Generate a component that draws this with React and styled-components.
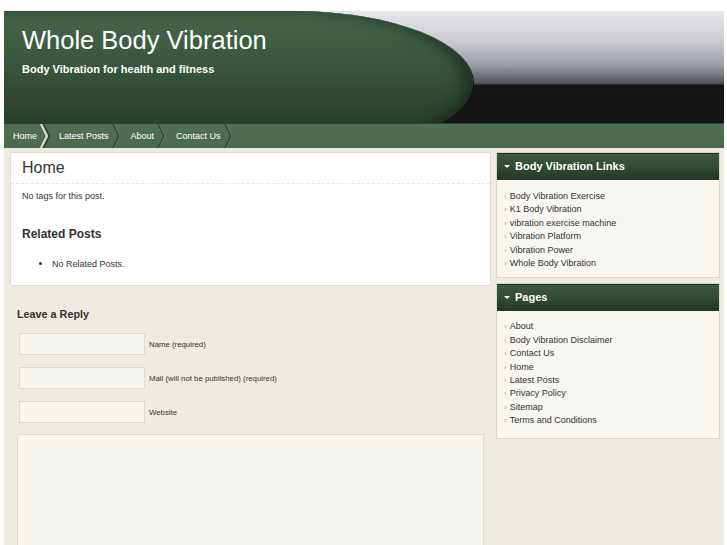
import React from 'react'
import styled, { createGlobalStyle } from 'styled-components'

const GlobalStyle = createGlobalStyle`
  html, body {
    margin: 0;
    padding: 0;
    background: #ffffff;
  }
  body {
    font-family: 'Liberation Sans', Arial, sans-serif;
    color: #333333;
  }
`

const Wrapper = styled.div`
  width: 720px;
  margin: 11px 0 0 4px;
  background-color: #efebe3;
`

const Header = styled.header`
  height: 112px;
  overflow: hidden;
  display: flex;
  background: linear-gradient(
    to bottom,
    #e8e8eb 0,
    #cbccd1 30px,
    #9c9ea6 54px,
    #60626a 69px,
    #4a4c53 73px,
    #151515 74px,
    #141414 112px
  );
`

const Banner = styled.div`
  flex: none;
  width: 469px;
  height: 144px;
  box-sizing: border-box;
  padding: 14px 0 0 18px;
  border-radius: 0 179px 179px 0 / 0 72px 72px 0;
  background: linear-gradient(to bottom, #46684c 0, #3a5a40 45px, #2a3f2e 112px);
  box-shadow: inset -10px 0 14px rgba(10, 20, 12, 0.5), 1px 0 0 #0e1510;
`

const SiteTitle = styled.h1`
  margin: 0;
  font-family: 'Liberation Sans', Arial, sans-serif;
  font-weight: 400;
  font-size: 25.5px;
  line-height: 30px;
  color: #ffffff;
`

const Tagline = styled.p`
  margin: 7px 0 0;
  font-size: 11px;
  line-height: 14px;
  font-weight: 700;
  color: #ffffff;
`

const Nav = styled.nav`
  height: 24px;
  display: flex;
  align-items: stretch;
  border-top: 1px solid #2c4331;
  background: linear-gradient(to bottom, #4f7055 0, #4a6a4f 100%);
`

const NavItem = styled.a`
  display: flex;
  align-items: center;
  padding: 0 0 1px 9px;
  font-size: 9px;
  color: #ffffff;
  text-decoration: none;
  span {
    padding-right: 3px;
  }
`

const Chevron = ({ active }) => (
  <svg width="10" height="24" viewBox="0 0 10 24">
    {active ? (
      <>
        <polyline points="2,0 8,12 2,24" fill="none" stroke="#2b402f" strokeWidth="4" />
        <polyline points="1,0 7,12 1,24" fill="none" stroke="#d3dcd3" strokeWidth="2.4" />
      </>
    ) : (
      <>
        <polyline points="2,0 8,12 2,24" fill="none" stroke="#6f8d73" strokeWidth="1" />
        <polyline points="1,0 7,12 1,24" fill="none" stroke="#2d4531" strokeWidth="1.4" />
      </>
    )}
  </svg>
)

const Body = styled.div`
  display: flex;
  gap: 5px;
  padding: 4px 4px 0 6px;
  align-items: flex-start;
`

const Main = styled.main`
  width: 481px;
  flex: none;
`

const PostBox = styled.article`
  background: #ffffff;
  border: 1px solid #e3ddd0;
  padding-bottom: 15px;
`

const PostTitle = styled.h2`
  margin: 0;
  padding: 6px 11px 6px;
  font-size: 16px;
  line-height: 18px;
  font-weight: 400;
  color: #333333;
  border-bottom: 1px dashed #ebe8e3;
`

const PostText = styled.p`
  margin: 6px 11px 0;
  font-size: 9px;
  line-height: 12px;
`

const SectionTitle = styled.h3`
  margin: ${(p) => p.$top} 0 0 ${(p) => p.$left};
  font-size: ${(p) => p.$size};
  line-height: 15px;
  font-weight: 700;
  color: #333333;
`

const BulletList = styled.ul`
  margin: 16px 0 0;
  padding-left: 41px;
  font-size: 9px;
  line-height: 12px;
  li::marker {
    font-size: 10px;
  }
`

const Form = styled.form`
  display: flex;
  flex-direction: column;
  gap: 12px;
  padding: 11px 0 0 9px;
`

const FieldRow = styled.div`
  display: flex;
  align-items: center;
  gap: 4px;
`

const Input = styled.div`
  width: 124px;
  height: 20px;
  background: #f7f5f0;
  border: 1px solid #e2dacb;
`

const Label = styled.label`
  font-size: 7.8px;
  color: #333333;
`

const TextArea = styled.div`
  margin: 11px 0 0 7px;
  width: 465px;
  height: 160px;
  background: #f7f5f0;
  border: 1px solid #e2dacb;
`

const Sidebar = styled.aside`
  width: 224px;
  flex: none;
  display: flex;
  flex-direction: column;
  gap: 5px;
`

const Widget = styled.section`
  border: 1px solid #ddd5c6;
  background: #f8f6f1;
`

const WidgetTitle = styled.h4`
  margin: 0;
  height: 23px;
  padding: 0 0 3px 7px;
  display: flex;
  align-items: center;
  gap: 5px;
  font-size: 11px;
  font-weight: 700;
  color: #ffffff;
  background: linear-gradient(to bottom, #3c5942 0, #304b36 50%, #243729 100%);
  border-top: 1px solid #1c2b20;
  &::before {
    content: '';
    border-left: 3px solid transparent;
    border-right: 3px solid transparent;
    border-top: 3px solid #ffffff;
    margin-top: 1px;
  }
`

const LinkList = styled.ul`
  list-style: none;
  margin: 0;
  padding: ${(p) => p.$pad};
  font-size: 9px;
  line-height: 13.4px;
  li {
    display: flex;
    gap: 3px;
    color: #333333;
  }
  li::before {
    content: '›';
    color: #a8a49c;
    font-size: 8px;
  }
`

const navItems = ['Home', 'Latest Posts', 'About', 'Contact Us']
const links = [
  'Body Vibration Exercise',
  'K1 Body Vibration',
  'vibration exercise machine',
  'Vibration Platform',
  'Vibration Power',
  'Whole Body Vibration',
]
const pages = [
  'About',
  'Body Vibration Disclaimer',
  'Contact Us',
  'Home',
  'Latest Posts',
  'Privacy Policy',
  'Sitemap',
  'Terms and Conditions',
]

const App = () => {
  return (
    <>
      <GlobalStyle />
      <Wrapper>
        <Header>
          <Banner>
            <SiteTitle>Whole Body Vibration</SiteTitle>
            <Tagline>Body Vibration for health and fitness</Tagline>
          </Banner>
        </Header>
        <Nav>
          {navItems.map((item, i) => (
            <NavItem key={item}>
              <span>{item}</span>
              <Chevron active={i === 0} />
            </NavItem>
          ))}
        </Nav>
        <Body>
          <Main>
            <PostBox>
              <PostTitle>Home</PostTitle>
              <PostText>No tags for this post.</PostText>
              <SectionTitle $top="25px" $left="11px" $size="12px">
                Related Posts
              </SectionTitle>
              <BulletList>
                <li>No Related Posts.</li>
              </BulletList>
            </PostBox>
            <SectionTitle $top="21px" $left="7px" $size="10.8px">
              Leave a Reply
            </SectionTitle>
            <Form>
              <FieldRow>
                <Input />
                <Label>Name (required)</Label>
              </FieldRow>
              <FieldRow>
                <Input />
                <Label>Mail (will not be published) (required)</Label>
              </FieldRow>
              <FieldRow>
                <Input />
                <Label>Website</Label>
              </FieldRow>
            </Form>
            <TextArea />
          </Main>
          <Sidebar>
            <Widget>
              <WidgetTitle>Body Vibration Links</WidgetTitle>
              <LinkList $pad="10px 8px 7px 7px">
                {links.map((l) => (
                  <li key={l}>{l}</li>
                ))}
              </LinkList>
            </Widget>
            <Widget>
              <WidgetTitle>Pages</WidgetTitle>
              <LinkList $pad="9px 8px 10px 7px">
                {pages.map((l) => (
                  <li key={l}>{l}</li>
                ))}
              </LinkList>
            </Widget>
          </Sidebar>
        </Body>
      </Wrapper>
    </>
  )
}

export default App
